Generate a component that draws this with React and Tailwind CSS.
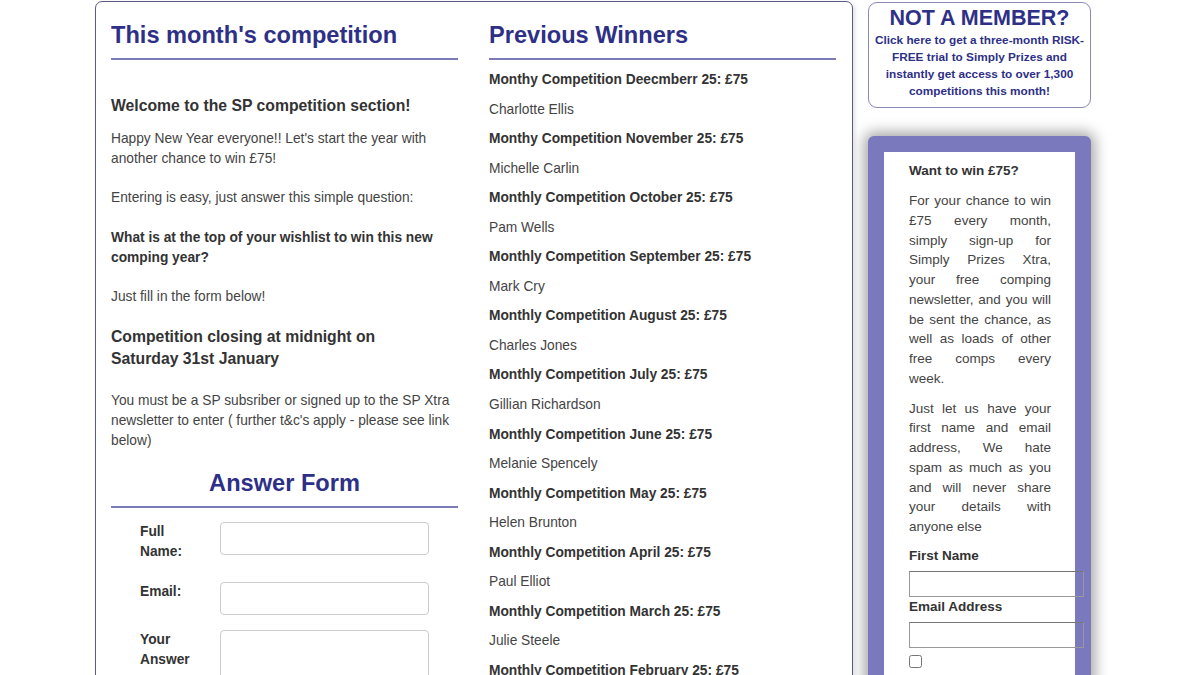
import React from "react";

const winners = [
  ["Monthy Competition Deecmberr 25: £75", "Charlotte Ellis"],
  ["Monthy Competition November 25: £75", "Michelle Carlin"],
  ["Monthly Competition October 25: £75", "Pam Wells"],
  ["Monthly Competition September 25: £75", "Mark Cry"],
  ["Monthly Competition August 25: £75", "Charles Jones"],
  ["Monthly Competition July 25: £75", "Gillian Richardson"],
  ["Monthly Competition June 25: £75", "Melanie Spencely"],
  ["Monthly Competition May 25: £75", "Helen Brunton"],
  ["Monthly Competition April 25: £75", "Paul Elliot"],
  ["Monthly Competition March 25: £75", "Julie Steele"],
  ["Monthly Competition February 25: £75", ""],
];

function App() {
  return (
    <div className="h-[675px] overflow-hidden bg-white font-['Liberation_Sans',Arial,sans-serif]">
      <div className="flex items-start pl-[95px] pt-[1px]">
        {/* Main content box */}
        <div className="w-[758px] h-[720px] border border-[#5a5c88] rounded-[7px] pl-[15px] pr-[15px] pt-[19px] flex gap-[31px] shadow-[2px_1px_4px_rgba(0,0,0,0.12)]">
          {/* Left column */}
          <div className="w-[347px] shrink-0">
            <h2 className="text-[23.6px] leading-[28px] font-bold text-[#2e3087] pb-[9px] border-b-2 border-[#7d7bb6]">
              This month's competition
            </h2>
            <h3 className="mt-[36px] text-[15.75px] leading-[20px] font-bold text-[#333]">
              Welcome to the SP competition section!
            </h3>
            <div className="text-[13.75px] leading-[20px] text-[#444]">
              <p className="mt-[13px]">
                Happy New Year everyone!! Let's start the year with another
                chance to win £75!
              </p>
              <p className="mt-[19px]">Entering is easy, just answer this simple question:</p>
              <p className="mt-[20px] font-bold text-[#333]">
                What is at the top of your wishlist to win this new comping year?
              </p>
              <p className="mt-[19px]">Just fill in the form below!</p>
            </div>
            <h3 className="mt-[19px] text-[15.75px] leading-[22px] font-bold text-[#333]">
              Competition closing at midnight on
              <br />
              Saturday 31st January
            </h3>
            <p className="mt-[21px] text-[13.75px] leading-[20px] text-[#444]">
              You must be a SP subsriber or signed up to the SP Xtra newsletter
              to enter ( further t&amp;c's apply - please see link below)
            </p>
            <h2 className="mt-[18px] text-center text-[23.6px] leading-[28px] font-bold text-[#2e3087] pb-[9px] border-b-2 border-[#7d7bb6]">
              Answer Form
            </h2>
            {/* Form */}
            <div className="ml-[29px] mt-[14px] text-[13.75px] leading-[20px] font-bold text-[#333]">
              <div className="flex mb-[20px]">
                <label className="w-[80px] pr-[16px]">Full Name:</label>
                <input className="w-[209px] h-[33px] border border-[#ccc] rounded-[4px]" />
              </div>
              <div className="flex mb-[15px]">
                <label className="w-[80px] pr-[16px]">Email:</label>
                <input className="w-[209px] h-[33px] border border-[#ccc] rounded-[4px]" />
              </div>
              <div className="flex">
                <label className="w-[80px] pr-[16px]">Your Answer</label>
                <textarea className="w-[209px] h-[90px] border border-[#ccc] rounded-[4px] resize-none" />
              </div>
            </div>
          </div>

          {/* Middle column */}
          <div className="w-[347px] shrink-0">
            <h2 className="text-[23.6px] leading-[28px] font-bold text-[#2e3087] pb-[9px] border-b-2 border-[#7d7bb6]">
              Previous Winners
            </h2>
            <div className="mt-[10px] text-[13.75px] leading-[19.55px]">
              {winners.map(([title, name]) => (
                <div key={title}>
                  <p className="mb-[10px] font-bold text-[#333]">{title}</p>
                  {name && <p className="mb-[10px] text-[#444]">{name}</p>}
                </div>
              ))}
            </div>
          </div>
        </div>

        {/* Sidebar */}
        <div className="w-[223px] ml-[15px] shrink-0">
          <div className="mt-[1px] h-[106px] border border-[#8a89b8] rounded-[9px] px-[3px] pt-[4px] text-center text-[#2e3087] font-bold">
            <div className="text-[21.5px] leading-[22px]">NOT A MEMBER?</div>
            <p className="mt-[3px] text-[11.8px] leading-[17px]">
              Click here to get a three-month RISK-FREE trial to Simply Prizes
              and instantly get access to over 1,300 competitions this month!
            </p>
          </div>

          <div className="mt-[28px] h-[560px] bg-[#7b79bd] rounded-[6px] p-[16px] shadow-[0_0_14px_4px_rgba(0,0,0,0.35)]">
            <div className="h-full bg-white pl-[25px] pr-[24px] pt-[9px] text-[13.5px] text-[#444]">
              <p className="leading-[20px] font-bold text-[#333]">Want to win £75?</p>
              <p className="mt-[10px] leading-[19.75px] text-justify">
                For your chance to win £75 every month, simply sign-up for
                Simply Prizes Xtra, your free comping newsletter, and you will
                be sent the chance, as well as loads of other free comps every
                week.
              </p>
              <p className="mt-[10px] leading-[19.75px] text-justify">
                Just let us have your first name and email address, We hate
                spam as much as you and will never share your details with
                anyone else
              </p>
              <label className="block mt-[9px] leading-[20px] font-bold text-[#333]">First Name</label>
              <input className="block mt-[5px] w-[175px] h-[26px] border border-[#999] border-t-[#767676]" />
              <label className="block leading-[20px] font-bold text-[#333]">Email Address</label>
              <input className="block mt-[5px] w-[175px] h-[26px] border border-[#999] border-t-[#767676]" />
              <input type="checkbox" className="block mt-[7px] w-[13px] h-[13px]" />
            </div>
          </div>
        </div>
      </div>
    </div>
  );
}

export default App;
